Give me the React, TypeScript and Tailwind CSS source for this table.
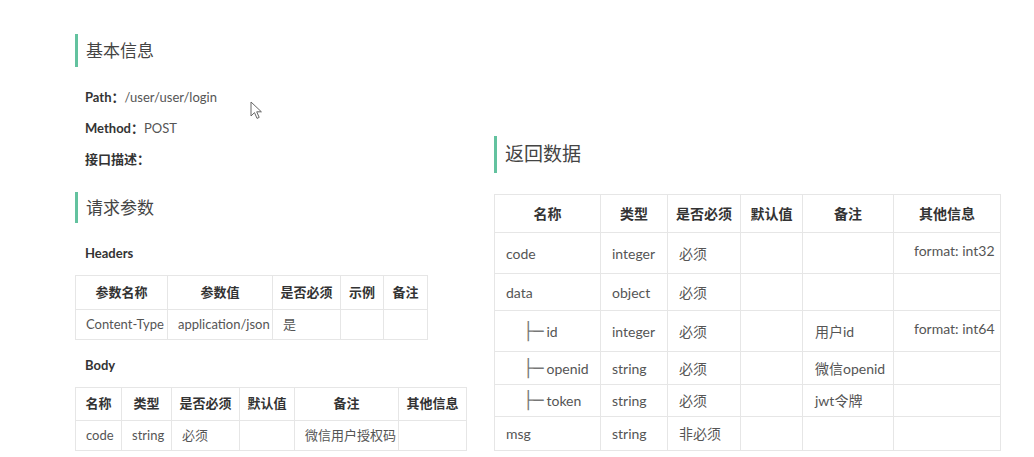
import React from 'react';

const bar = 'flex items-center border-l-[3px] border-[#63c29f] pl-[8px] text-[#444] font-normal';
const cell = 'border border-[#e6e6e6] px-[10px] align-middle whitespace-nowrap';
const head = 'border border-[#e6e6e6] text-center font-bold text-[#333] align-middle whitespace-nowrap';

const headerCols = [92, 105, 68, 43, 44];
const bodyCols = [46, 50, 68, 55, 104, 68];
const respCols = [106, 67, 73, 62, 91, 107];

const respRows = [
  { name: 'code', type: 'integer', req: '必须', note: '', other: 'format: int32', h: 'h-[41px]' },
  { name: 'data', type: 'object', req: '必须', note: '', other: '', h: 'h-[37px]' },
  { name: 'id', type: 'integer', req: '必须', note: '用户id', other: 'format: int64', h: 'h-[41px]', child: true },
  { name: 'openid', type: 'string', req: '必须', note: '微信openid', other: '', h: 'h-[33px]', child: true },
  { name: 'token', type: 'string', req: '必须', note: 'jwt令牌', other: '', h: 'h-[32px]', child: true },
  { name: 'msg', type: 'string', req: '非必须', note: '', other: '', h: 'h-[34px]' },
];

function Cols({ widths }: { widths: number[] }) {
  return (
    <colgroup>
      {widths.map((w, i) => (
        <col key={i} style={{ width: w }} />
      ))}
    </colgroup>
  );
}

function Cursor() {
  return (
    <svg className="absolute left-[250px] top-[101px]" width="14" height="19" viewBox="0 0 14 19">
      <path
        d="M1 1 L1 15 L4.5 11.6 L7 17.4 L9.2 16.4 L6.7 10.8 L11.4 10.8 Z"
        fill="#fff"
        stroke="#666"
        strokeWidth="1"
        strokeLinejoin="round"
      />
    </svg>
  );
}

export default function App() {
  return (
    <div className="relative w-[1034px] h-[457px] overflow-hidden bg-white font-['Lato','Noto_Sans_CJK_SC',sans-serif]">
      <Cursor />
      <div className="flex pl-[75px]">
        {/* left column */}
        <div className="w-[419px] shrink-0 pt-[34px] text-[13px] text-[#555]">
          <div className={`${bar} h-[33px] text-[17px]`}>基本信息</div>
          <div className="mt-[21px] h-[20px] pl-[10px] flex items-center">
            <span className="font-bold text-[#333]">Path：</span>
            <span>/user/user/login</span>
          </div>
          <div className="mt-[11px] h-[20px] pl-[10px] flex items-center">
            <span className="font-bold text-[#333]">Method：</span>
            <span>POST</span>
          </div>
          <div className="mt-[11px] h-[20px] pl-[10px] flex items-center font-bold text-[#333]">接口描述：</div>

          <div className={`${bar} mt-[22px] h-[31px] text-[17px]`}>请求参数</div>
          <div className="mt-[21px] h-[20px] pl-[10px] flex items-center font-bold text-[#333]">Headers</div>
          <table className="mt-[11px] table-fixed border-collapse w-[352px]">
            <Cols widths={headerCols} />
            <thead>
              <tr className="h-[34px]">
                {['参数名称', '参数值', '是否必须', '示例', '备注'].map((t) => (
                  <th key={t} className={head}>{t}</th>
                ))}
              </tr>
            </thead>
            <tbody>
              <tr className="h-[30px]">
                <td className={cell}>Content-Type</td>
                <td className={`${cell} px-[9px]`}>application/json</td>
                <td className={cell}>是</td>
                <td className={cell}></td>
                <td className={cell}></td>
              </tr>
            </tbody>
          </table>

          <div className="mt-[16px] h-[20px] pl-[10px] flex items-center font-bold text-[#333]">Body</div>
          <table className="mt-[11px] table-fixed border-collapse w-[391px]">
            <Cols widths={bodyCols} />
            <thead>
              <tr className="h-[33px]">
                {['名称', '类型', '是否必须', '默认值', '备注', '其他信息'].map((t) => (
                  <th key={t} className={head}>{t}</th>
                ))}
              </tr>
            </thead>
            <tbody>
              <tr className="h-[30px]">
                <td className={`${cell} px-[9px]`}>code</td>
                <td className={`${cell} px-[9px]`}>string</td>
                <td className={`${cell} px-[9px]`}>必须</td>
                <td className={cell}></td>
                <td className={`${cell} px-[9px]`}>微信用户授权码</td>
                <td className={cell}></td>
              </tr>
            </tbody>
          </table>
        </div>

        {/* right column */}
        <div className="pt-[136px] text-[14px] text-[#555]">
          <div className={`${bar} h-[37px] text-[19px]`}>返回数据</div>
          <table className="mt-[21px] table-fixed border-collapse w-[506px]">
            <Cols widths={respCols} />
            <thead>
              <tr className="h-[38px]">
                {['名称', '类型', '是否必须', '默认值', '备注', '其他信息'].map((t) => (
                  <th key={t} className={head}>{t}</th>
                ))}
              </tr>
            </thead>
            <tbody>
              {respRows.map((r) => (
                <tr key={r.name} className={r.h}>
                  <td className={`${cell} px-[11px]`}>
                    {r.child ? (
                      <span className="pl-[17px]">
                        <span className="font-['DejaVu_Sans_Mono'] text-[17px] leading-none text-[#777]">├─</span>
                        <span className="ml-[3px]">{r.name}</span>
                      </span>
                    ) : (
                      r.name
                    )}
                  </td>
                  <td className={`${cell} px-[11px]`}>{r.type}</td>
                  <td className={`${cell} px-[11px]`}>{r.req}</td>
                  <td className={cell}></td>
                  <td className={`${cell} px-[12px]`}>{r.note}</td>
                  <td className="border border-[#e6e6e6] align-top pl-[20px] pt-[7px] whitespace-nowrap">{r.other}</td>
                </tr>
              ))}
            </tbody>
          </table>
        </div>
      </div>
    </div>
  );
}
